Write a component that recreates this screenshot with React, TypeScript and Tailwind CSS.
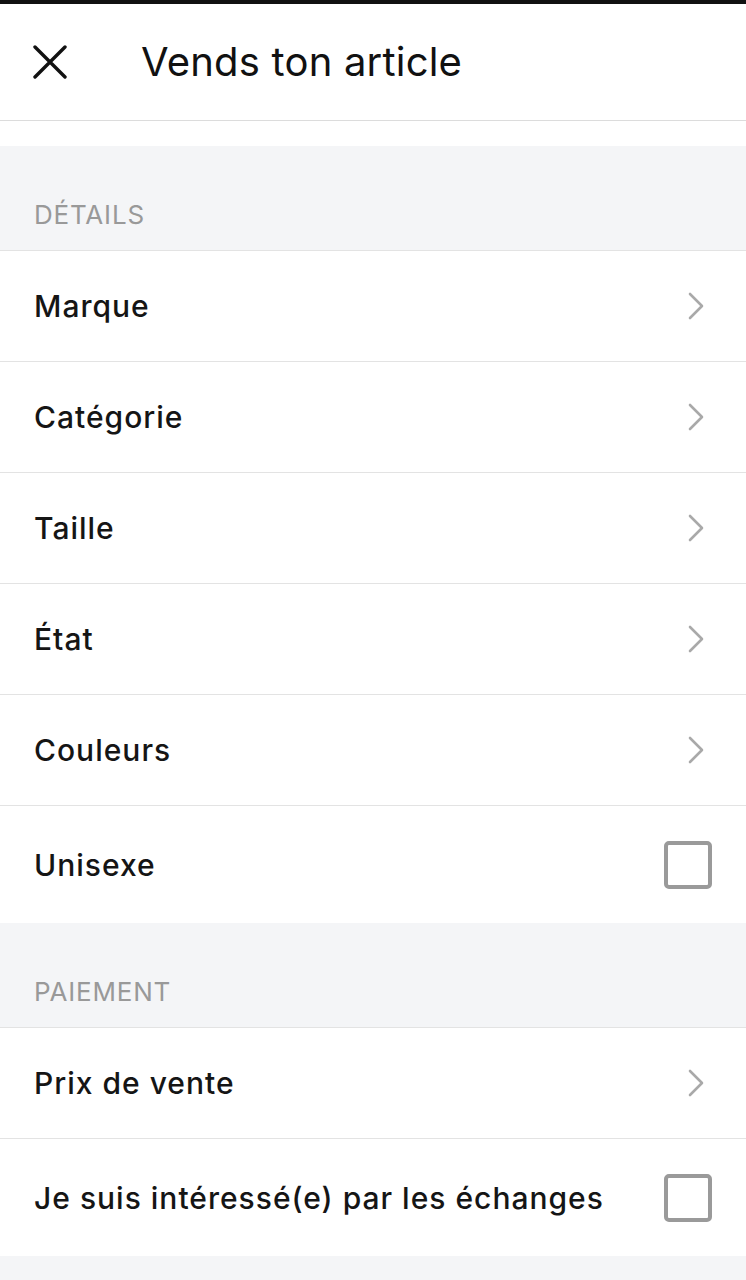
import React from "react";

const font = { fontFamily: "Inter, 'Noto Sans', sans-serif" };

function Chevron() {
  return (
    <svg width="18" height="28" viewBox="0 0 18 28" fill="none" className="shrink-0">
      <path d="M3 2 L15 14 L3 26" stroke="#a9a9a9" strokeWidth="2.6" strokeLinecap="round" strokeLinejoin="round" />
    </svg>
  );
}

function Checkbox() {
  return <div className="w-[48px] h-[48px] rounded-[5px] border-[4px] border-[#9a9a9a] bg-white shrink-0" />;
}

function SectionHeader({ label }: { label: string }) {
  return (
    <div className="h-[105px] bg-[#f4f5f7] flex items-end px-[34px] pb-[20px] border-b border-[#e3e3e3]">
      <span className="text-[26px] leading-[30px] text-[#999999] tracking-[0.8px]">{label}</span>
    </div>
  );
}

function Row({ label, checkbox, last }: { label: string; checkbox?: boolean; last?: boolean }) {
  return (
    <div
      className={
        "bg-white flex items-center justify-between pl-[34px] pr-[34px] " +
        (checkbox ? "h-[117px] " : "h-[111px] ") +
        (last ? "" : "border-b border-[#e3e3e3]")
      }
    >
      <span className="text-[30px] leading-[40px] font-medium tracking-[1px] text-[#151515]">{label}</span>
      {checkbox ? <Checkbox /> : <div className="pr-[7px]"><Chevron /></div>}
    </div>
  );
}

export default function App() {
  return (
    <div className="w-[746px] h-[1280px] overflow-hidden bg-[#f4f5f7]" style={font}>
      <div className="h-[4px] bg-[#111111]" />
      <header className="h-[117px] bg-white border-b border-[#dcdcdc] flex items-center">
        <div className="w-[141px] pl-[33px] flex items-center">
          <svg width="34" height="34" viewBox="0 0 34 34" fill="none">
            <path d="M2 2 L32 32 M32 2 L2 32" stroke="#111" strokeWidth="3.4" strokeLinecap="round" />
          </svg>
        </div>
        <h1 className="text-[40px] leading-[46px] tracking-[0.2px] text-[#111111]">Vends ton article</h1>
      </header>
      <div className="h-[25px] bg-white" />

      <SectionHeader label="DÉTAILS" />
      <Row label="Marque" />
      <Row label="Catégorie" />
      <Row label="Taille" />
      <Row label="État" />
      <Row label="Couleurs" />
      <Row label="Unisexe" checkbox last />

      <SectionHeader label="PAIEMENT" />
      <Row label="Prix de vente" />
      <Row label="Je suis intéressé(e) par les échanges" checkbox last />
    </div>
  );
}
